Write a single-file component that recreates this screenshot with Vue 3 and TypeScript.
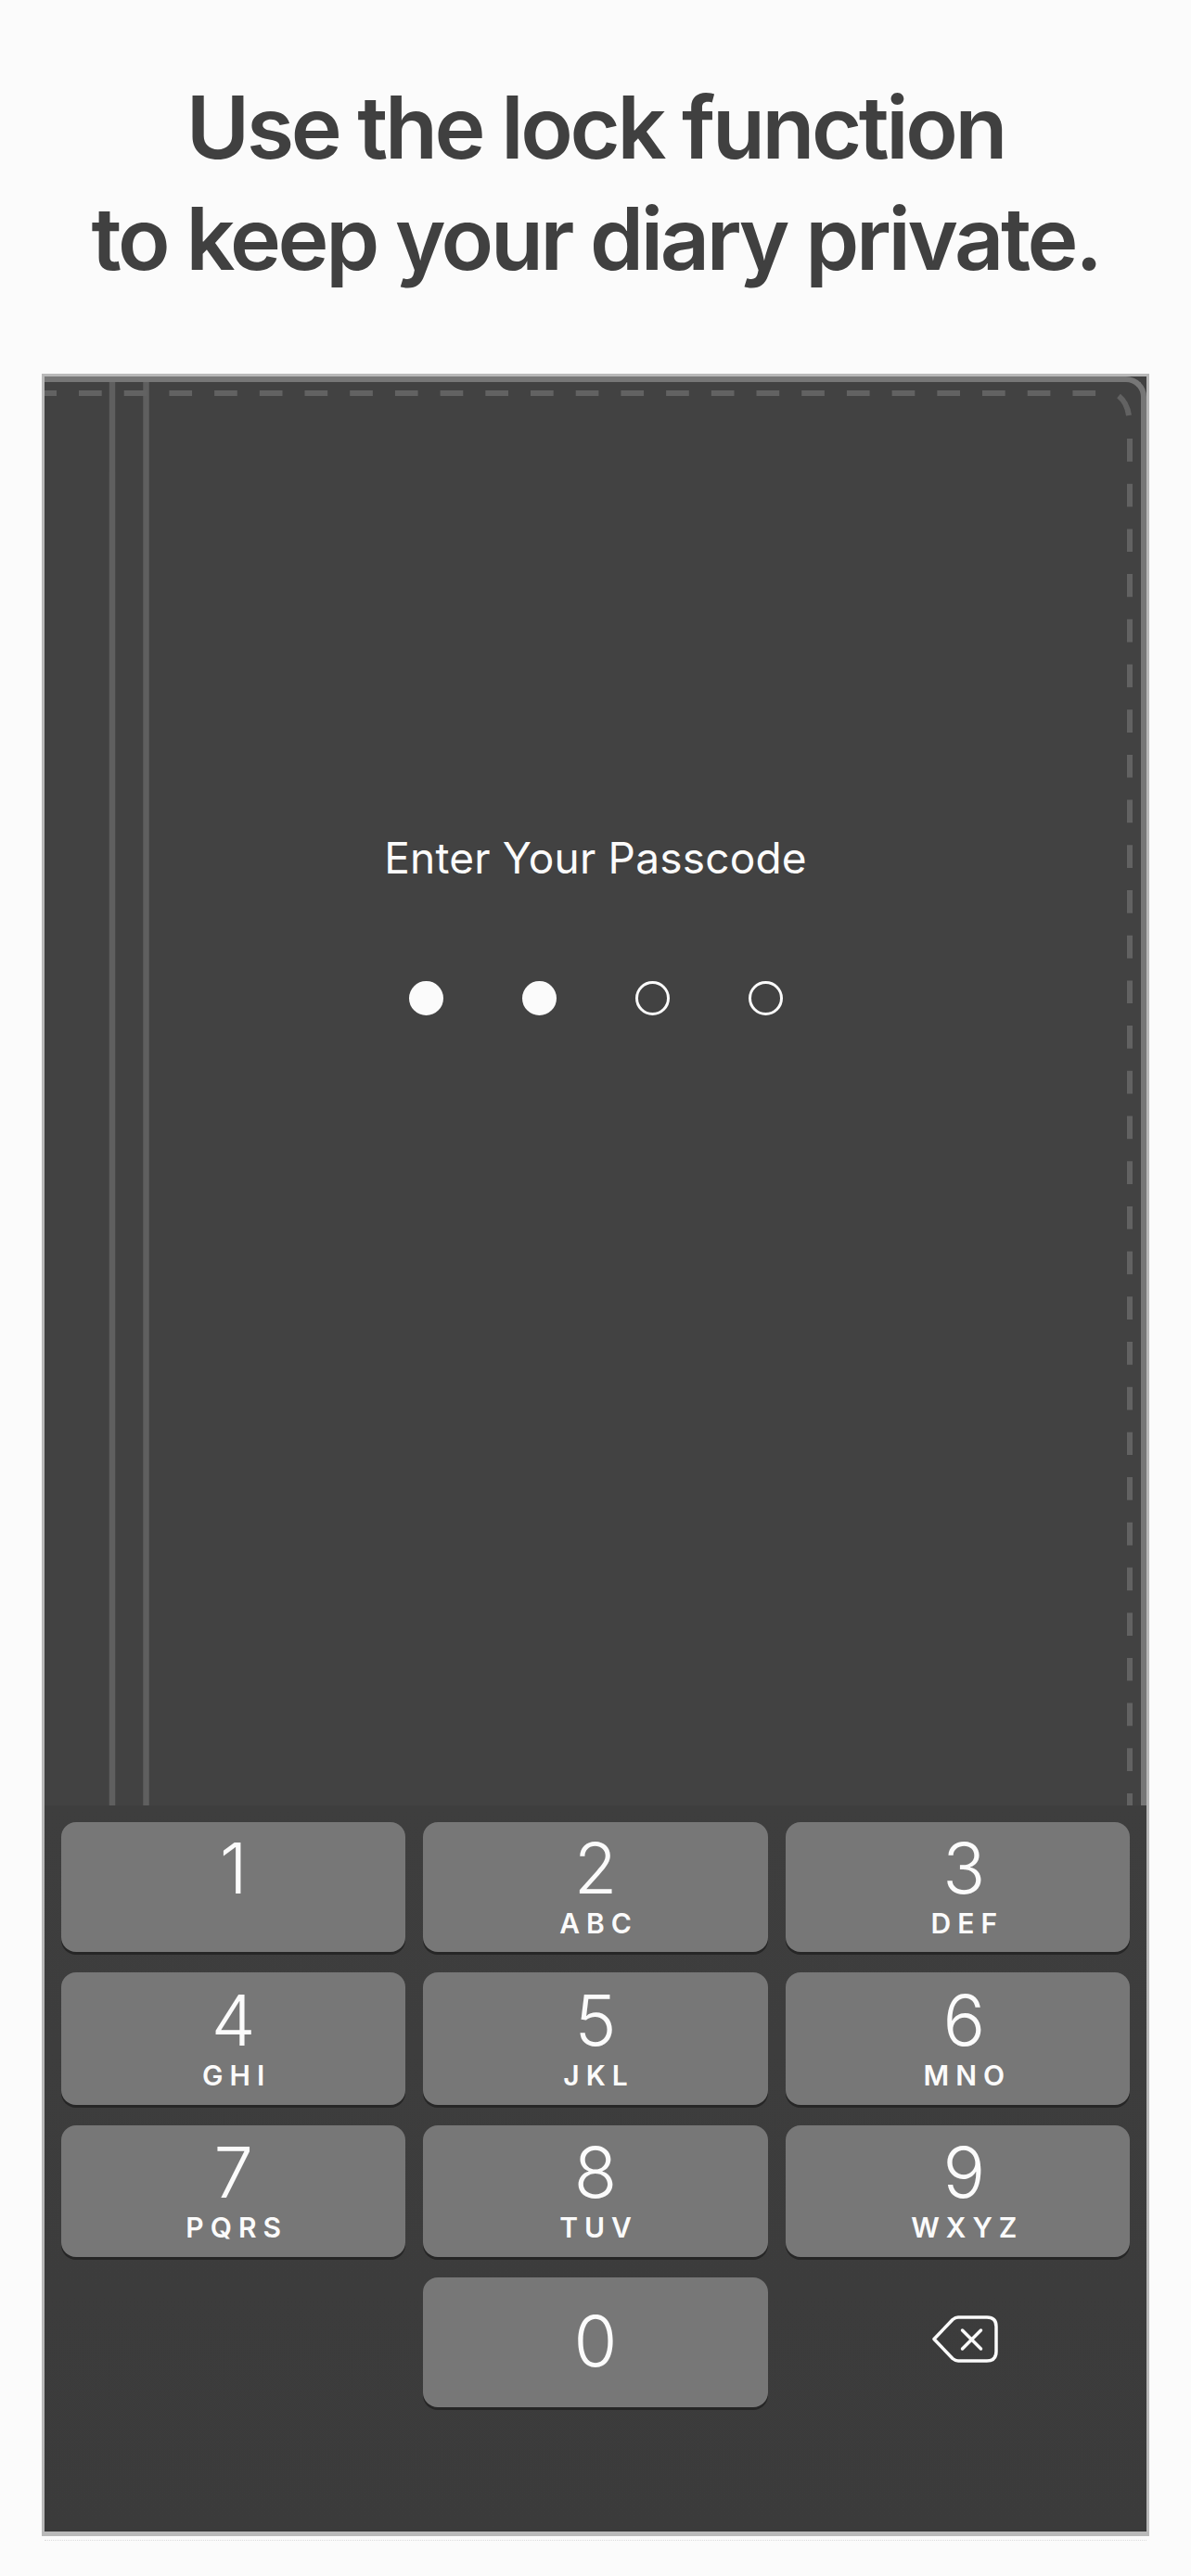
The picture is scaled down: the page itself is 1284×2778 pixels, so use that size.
<script setup lang="ts">
interface Key { digit: string; letters: string }
const keys: Key[] = [
  { digit: '1', letters: '' },
  { digit: '2', letters: 'ABC' },
  { digit: '3', letters: 'DEF' },
  { digit: '4', letters: 'GHI' },
  { digit: '5', letters: 'JKL' },
  { digit: '6', letters: 'MNO' },
  { digit: '7', letters: 'PQRS' },
  { digit: '8', letters: 'TUV' },
  { digit: '9', letters: 'WXYZ' },
]
const dots = [true, true, false, false]
</script>

<template>
  <div class="page">
    <h1 class="title">Use the lock function<br />to keep your diary private.</h1>
    <div class="frame">
      <div class="cover">
        <svg class="stitch" width="1182" height="1535" viewBox="0 0 1182 1535" fill="none">
          <path d="M73 0V1535M109.500 0V1535" stroke="#5f5f5f" stroke-width="6.500" />
          <path d="M-11.700 12H1134" stroke="#626262" stroke-width="6" stroke-dasharray="24.700 24" />
          <path d="M1158 15Q1167 22 1169 36" stroke="#626262" stroke-width="6" />
          <path d="M1170 61V1535" stroke="#626262" stroke-width="6" stroke-dasharray="24.700 24" />
        </svg>
        <p class="prompt">Enter Your Passcode</p>
        <div class="dots">
          <span v-for="(filled, i) in dots" :key="i" class="dot" :class="{ filled }"></span>
        </div>
      </div>
      <div class="keypad">
        <button v-for="k in keys" :key="k.digit" class="key">
          <span class="digit">{{ k.digit }}</span>
          <span class="letters">{{ k.letters }}</span>
        </button>
        <div class="blank"></div>
        <button class="key zero">
          <span class="digit">0</span>
        </button>
        <div class="back">
          <svg width="72" height="54" viewBox="0 0 72 54" fill="none" stroke="#fbfbfb" stroke-width="3.500" stroke-linecap="round" stroke-linejoin="round">
            <path d="M3 26.500L23 5.500Q26 3 29 3H60Q70 3 70 13V40Q70 50 60 50H29Q26 50 23 47.500Z" />
            <path d="M33.500 17L53.500 37M53.500 17L33.500 37" />
          </svg>
        </div>
      </div>
    </div>
  </div>
</template>

<style scoped>
.page {
  width: 1284px;
  height: 2778px;
  box-sizing: border-box;
  background: #fbfbfb;
  padding: 0 45px 43px;
  display: flex;
  flex-direction: column;
  font-family: Inter, "Liberation Sans", sans-serif;
}
.title {
  margin: 0;
  height: 403px;
  padding-top: 77px;
  box-sizing: border-box;
  font-size: 93px;
  line-height: 120px;
  font-weight: 600;
  letter-spacing: -3.350px;
  text-align: center;
  color: #404040;
  white-space: nowrap;
}
.frame {
  position: relative;
  flex: 1;
  min-height: 0;
  display: flex;
  flex-direction: column;
  border: 3px solid #b9b9b9;
  border-bottom-width: 5px;
  background: #424242;
}
.frame::after {
  content: "";
  position: absolute;
  left: 0;
  right: 0;
  bottom: -10px;
  border-bottom: 1px dotted #dcdcdc;
}
.cover {
  position: relative;
  flex: 1;
  min-height: 0;
  background: #424242;
  border-top: 6px solid #777;
  border-right: 6px solid #777;
  border-top-right-radius: 22px;
  display: flex;
  flex-direction: column;
  align-items: center;
  padding: 485px 0 0 6px;
  overflow: hidden;
}
.stitch {
  position: absolute;
  left: 0;
  top: 0;
}
.prompt {
  position: relative;
  margin: 0;
  font-size: 46px;
  line-height: 56px;
  font-weight: 400;
  letter-spacing: 0.200px;
  color: #fbfbfb;
}
.dots {
  position: relative;
  display: flex;
  gap: 85px;
  margin-top: 105px;
}
.dot {
  width: 37px;
  height: 37px;
  box-sizing: border-box;
  border: 3px solid #fbfbfb;
  border-radius: 50%;
}
.dot.filled {
  background: #fbfbfb;
}
.keypad {
  height: 783px;
  box-sizing: border-box;
  padding: 18px 18px 0;
  background: linear-gradient(#3e3e3e, #3b3b3b);
  display: grid;
  grid-template-columns: repeat(3, 1fr);
  grid-template-rows: 140px 143px 142px 140px;
  gap: 22px 19px;
  align-content: start;
}
.key {
  display: flex;
  flex-direction: column;
  align-items: center;
  justify-content: center;
  margin: 0;
  padding: 0;
  border: 0;
  border-radius: 16px;
  background: #777;
  box-shadow: 0 3px 0 #262626;
  color: #fbfbfb;
  font-family: inherit;
}
.key:nth-child(3n) {
  padding-left: 14px;
}
.digit {
  font-size: 76px;
  line-height: 60px;
  font-weight: 300;
}
.zero .digit {
  margin-bottom: 4px;
}
.letters {
  height: 24px;
  margin-top: 18px;
  margin-right: -7px;
  font-size: 30px;
  line-height: 24px;
  font-weight: 600;
  letter-spacing: 7px;
}
.back {
  display: flex;
  align-items: center;
  justify-content: center;
  padding: 0 0 6px 16px;
}
</style>
